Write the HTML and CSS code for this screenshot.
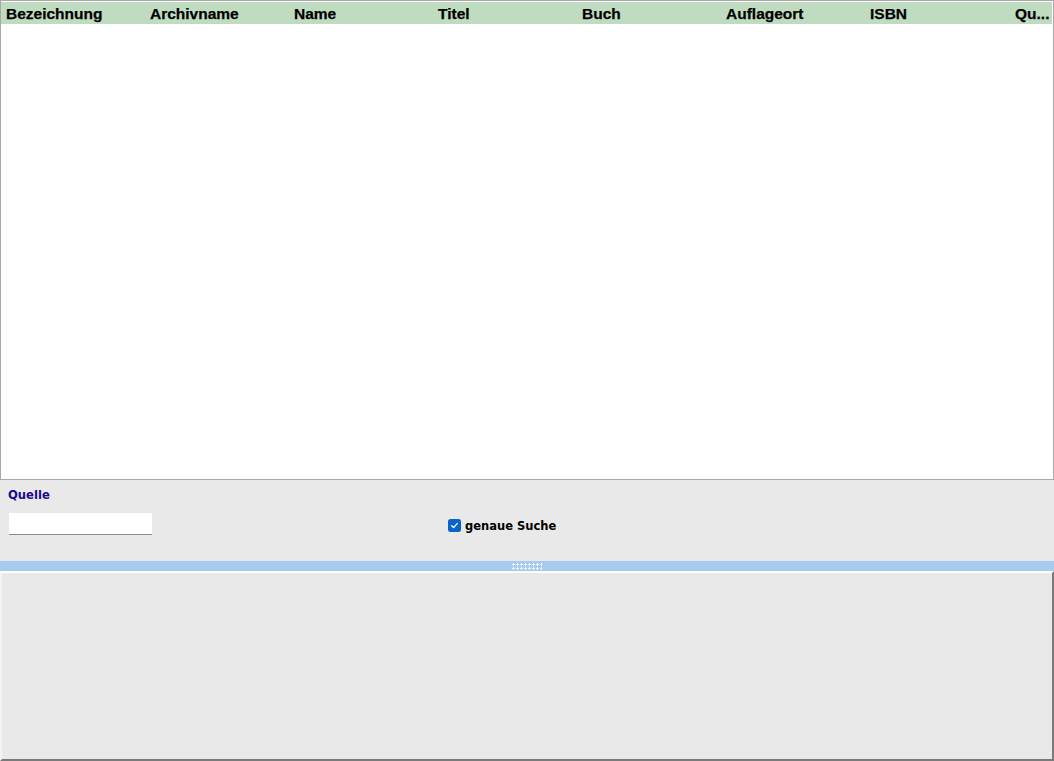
FILE: index.html
```html
<!DOCTYPE html>
<html>
<head>
<meta charset="utf-8">
<link rel="stylesheet" href="styles.css">
</head>
<body>
<div class="app">
  <div class="grid">
    <div class="grid-head">
      <div class="col">Bezeichnung</div>
      <div class="col">Archivname</div>
      <div class="col">Name</div>
      <div class="col">Titel</div>
      <div class="col">Buch</div>
      <div class="col">Auflageort</div>
      <div class="col">ISBN</div>
      <div class="col last">Qu...</div>
    </div>
  </div>
  <div class="filter">
    <div class="field">
      <label class="field-label">Quelle</label>
      <input class="field-input" type="text">
    </div>
    <label class="check">
      <span class="check-box">
        <svg width="13" height="13" viewBox="0 0 13 13"><rect x="0" y="0" width="13" height="13" rx="2.5" fill="#0a64c8"/><path d="M3.6 6.8 L5.6 8.6 L9.4 4.4" fill="none" stroke="#ffffff" stroke-width="1.3" stroke-linecap="round" stroke-linejoin="round"/></svg>
      </span>
      <span class="check-text">genaue Suche</span>
    </label>
  </div>
  <div class="splitter"><span class="grip"></span></div>
  <div class="panel"></div>
</div>
</body>
</html>
```
FILE: styles.css
```css
html, body {
  margin: 0;
  padding: 0;
  background: #ffffff;
}
.app {
  width: 1054px;
  height: 761px;
  display: flex;
  flex-direction: column;
  font-family: "Liberation Sans", Arial, sans-serif;
}
.grid {
  height: 478px;
  border: 1px solid #a8a8a8;
  background: #ffffff;
  box-sizing: content-box;
  width: 1052px;
  overflow: hidden;
}
.grid-head {
  height: 22px;
  margin-top: 1px;
  background: #c0dcc0;
  display: flex;
  width: 1051px;
  overflow: hidden;
}
.col {
  flex: 0 0 144px;
  box-sizing: border-box;
  padding-left: 5px;
  font-weight: bold;
  font-size: 15.5px;
  line-height: 24px;
  color: #000000;
  white-space: nowrap;
  -webkit-text-stroke: 0.25px #000000;
}
.col.last {
  flex: 0 0 auto;
  padding-left: 6px;
}
.filter {
  height: 81px;
  background: #e9e9e9;
  display: flex;
  align-items: flex-start;
}
.field {
  display: flex;
  flex-direction: column;
  padding-left: 8px;
  padding-top: 8px;
  width: 440px;
}
.field-label {
  font-family: "DejaVu Sans", Verdana, sans-serif;
  font-weight: bold;
  font-size: 11.6px;
  color: #1a0a8c;
  line-height: 14px;
  height: 14px;
}
.field-input {
  margin: 11px 0 0 1px;
  width: 143px;
  height: 22px;
  box-sizing: border-box;
  border: none;
  border-bottom: 1px solid #8a8a8a;
  background: #ffffff;
  padding: 0;
  outline: none;
}
.check {
  display: flex;
  align-items: center;
  margin-top: 38px;
  gap: 4px;
}
.check-box {
  display: block;
  width: 13px;
  height: 13px;
}
.check-box svg {
  display: block;
}
.check-text {
  font-family: "DejaVu Sans", Verdana, sans-serif;
  font-weight: bold;
  font-size: 11.5px;
  color: #000000;
  line-height: 14px;
  padding-top: 1px;
}
.splitter {
  height: 10px;
  background: #a6caf0;
  display: flex;
  justify-content: center;
  align-items: center;
}
.grip {
  display: block;
  width: 30px;
  height: 7px;
  margin-right: 1px;
  background-image: radial-gradient(circle at 1.5px 1.5px, #f0f4fa 1px, transparent 1.2px);
  background-size: 4px 4px;
  background-position: 0 0;
}
.panel {
  flex: 1;
  background: #e9e9e9;
  border-top: 2px solid #ffffff;
  border-left: 2px solid #f4f4f4;
  border-right: 2px solid #7a7a7a;
  border-bottom: 2px solid #7a7a7a;
  box-sizing: border-box;
}
```
